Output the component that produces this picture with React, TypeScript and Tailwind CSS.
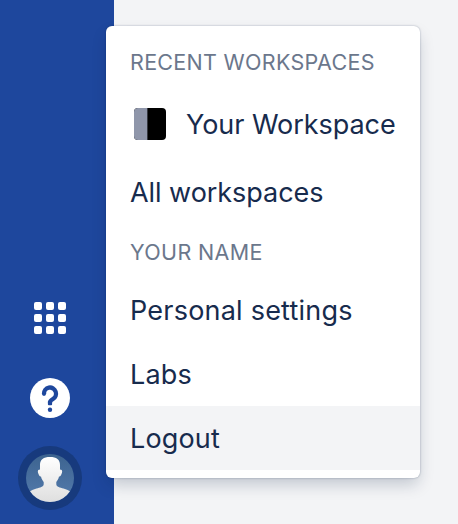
import type { ReactNode } from "react";

const DOTS = [0, 12, 24];

function Row({ children, className = "" }: { children: ReactNode; className?: string }) {
  return (
    <button className={`flex h-16 w-full shrink-0 items-center whitespace-nowrap px-6 text-left text-[27px] leading-8 font-[370] text-[#172b4d] ${className}`}>
      {children}
    </button>
  );
}

function Heading({ children, className = "" }: { children: ReactNode; className?: string }) {
  return (
    <h2 className={`flex shrink-0 items-center whitespace-nowrap px-6 text-[21.5px] leading-6 font-[370] text-[#6b778c] ${className}`}>
      {children}
    </h2>
  );
}

export default function App() {
  return (
    <div className="relative flex h-[524px] w-[458px] overflow-hidden bg-[#f3f4f6] font-['Inter',sans-serif] antialiased">
      <nav className="flex w-[114px] shrink-0 flex-col items-center justify-end bg-[#1e479d] pr-3.5 pb-3.5">
        <svg width="32" height="32" viewBox="0 0 32 32" fill="white" className="mb-11">
          {DOTS.map((y) => DOTS.map((x) => <rect key={`${x}-${y}`} x={x} y={y} width="8" height="8" rx="2" />))}
        </svg>
        <svg width="40" height="40" viewBox="0 0 40 40" className="mb-7">
          <circle cx="20" cy="20" r="20" fill="white" />
          <path d="M14 16A6 6.200 0 1 1 22.800 21.200C21 22.200 20 23 20 24.500" fill="none" stroke="#1e479d" strokeWidth="4.3" />
          <path d="M11.900 15.800h4.200a2.100 2.100 0 0 1-4.200 0z" fill="#1e479d" />
          <path d="M17.900 23.500h4.200v2.700a1 1 0 0 1-1 1h-2.200a1 1 0 0 1-1-1z" fill="#1e479d" />
          <circle cx="20" cy="31.8" r="2.2" fill="#1e479d" />
        </svg>
        <svg width="64" height="64" viewBox="0 0 64 64">
          <defs>
            <linearGradient id="avatar-bg" x1="0" y1="0" x2="0" y2="1">
              <stop stopColor="#3c638f" />
              <stop offset="1" stopColor="#547cae" />
            </linearGradient>
            <linearGradient id="avatar-person" x1="0" y1="0" x2="0" y2="1">
              <stop stopColor="#ffffff" />
              <stop offset="1" stopColor="#dedede" />
            </linearGradient>
            <clipPath id="avatar-clip">
              <circle cx="32" cy="32" r="24" />
            </clipPath>
          </defs>
          <circle cx="32" cy="32" r="32" fill="#173a7d" />
          <circle cx="32" cy="32" r="24" fill="url(#avatar-bg)" />
          <path
            clipPath="url(#avatar-clip)"
            fill="url(#avatar-person)"
            d="M22 19C22 13.500 25.500 11 32 11S42 13.500 42 19V23.500C44.500 23.500 44.600 25.500 43.500 28C42.800 29.800 42 30.500 41 30.600C40.500 33 39.500 34.500 38.300 36V38.200C38.500 41 42 41.400 45.500 42.600C48.500 43.500 51 44.500 53 46.500V57H11V46.500C13 44.500 15.500 43.500 18.500 42.600C22 41.400 25.500 41 25.700 38.200V36C24.500 34.500 23.500 33 23 30.600C22 30.500 21.200 29.800 20.500 28C19.400 25.500 19.500 23.500 22 23.500Z"
          />
        </svg>
      </nav>

      <div className="absolute top-[26px] left-[106px] flex h-[452px] w-[314px] flex-col overflow-hidden rounded-md bg-white shadow-[0_0_2px_rgba(9,30,66,0.36),0_8px_16px_-2px_rgba(9,30,66,0.22)]">
        <Heading className="h-[66px] pt-[6px]">
          <span className="tracking-[0.3px]">RECENT WORKSPACES</span>
        </Heading>
        <Row>
          <span className="mr-5 ml-1 flex h-8 w-8 shrink-0 overflow-hidden rounded-[4px] bg-black">
            <span className="w-[13px] bg-[#8f96aa]" />
            <span className="w-px bg-[#353840]" />
          </span>
          <span className="pt-0.5 tracking-[-0.05px]">Your Workspace</span>
        </Row>
        <Row className="mt-1">
          <span className="pt-0.5 tracking-[-0.05px]">All workspaces</span>
        </Row>
        <Heading className="h-[54px]">
          <span className="pt-0.5 tracking-[0.36px]">YOUR NAME</span>
        </Heading>
        <Row>
          <span className="pt-0.5 tracking-[0.22px]">Personal settings</span>
        </Row>
        <Row>
          <span className="pt-0.5 tracking-[0.2px]">Labs</span>
        </Row>
        <Row className="bg-[#f3f4f6]">
          <span className="pt-0.5 tracking-[0.15px]">Logout</span>
        </Row>
      </div>
    </div>
  );
}
